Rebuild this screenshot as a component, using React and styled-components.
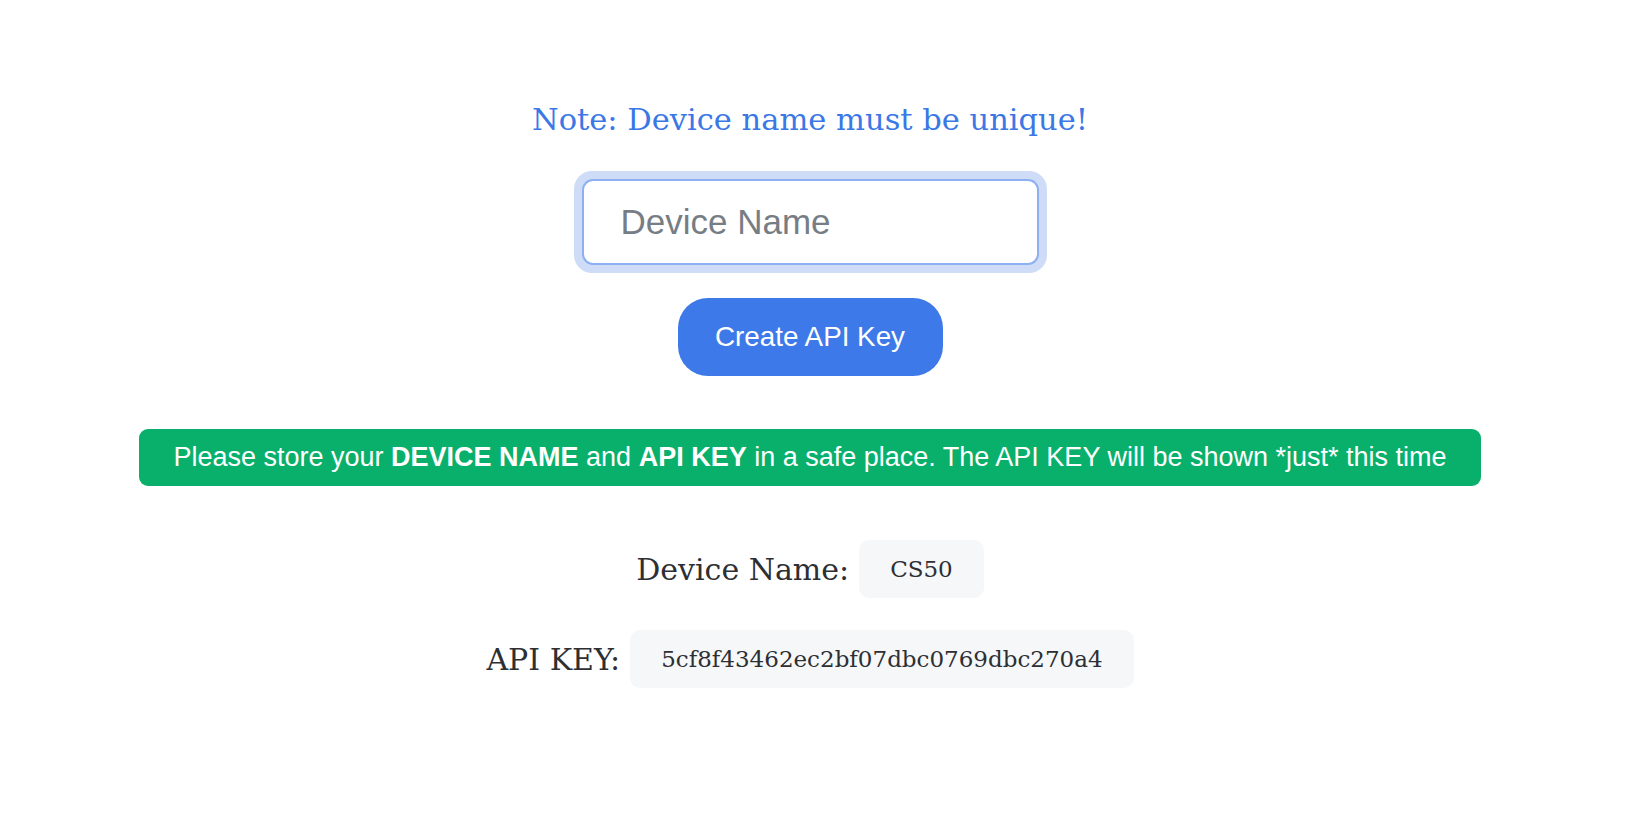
import React from "react";
import styled, { createGlobalStyle } from "styled-components";

const Global = createGlobalStyle`
  html, body { margin: 0; padding: 0; background: #fff; }
  body { font-family: "DejaVu Serif", serif; color: #2d2f33; }
`;

const Page = styled.main`
  width: calc(100% - 11px);
  display: flex;
  flex-direction: column;
  align-items: center;
  padding-top: 100px;
`;

const Heading = styled.h2`
  margin: 0;
  font-family: "DejaVu Serif", serif;
  font-weight: 400;
  font-size: 30.5px;
  line-height: 40px;
  color: #3b78e6;
`;

const Ring = styled.div`
  margin-top: 31px;
  padding: 8px;
  border-radius: 18px;
  background: #cedcf8;
`;

const Input = styled.input`
  box-sizing: border-box;
  display: block;
  width: 457px;
  height: 86px;
  padding: 0 0 0 37px;
  border: 2px solid #8db0f2;
  border-radius: 11px;
  background: #fff;
  outline: none;
  font-family: "Liberation Sans", Arial, sans-serif;
  font-size: 35px;
  color: #2d2f33;
  caret-color: #000;
  &::placeholder { color: #777d85; }
`;

const Button = styled.button`
  margin-top: 25px;
  width: 265px;
  height: 78px;
  border: none;
  border-radius: 30px;
  background: #3d79e8;
  color: #fff;
  font-family: "Liberation Sans", Arial, sans-serif;
  font-size: 27.8px;
  cursor: pointer;
`;

const Banner = styled.div`
  box-sizing: border-box;
  margin-top: 53px;
  width: 1342px;
  height: 57px;
  display: flex;
  align-items: center;
  justify-content: center;
  border-radius: 9px;
  background: #08b06b;
  color: #fff;
  font-family: "Liberation Sans", Arial, sans-serif;
  font-size: 27px;
  white-space: nowrap;
  b { font-weight: 700; }
`;

const Row = styled.div`
  display: flex;
  align-items: center;
  gap: 10px;
  margin-top: ${(p) => p.$top}px;
`;

const Label = styled.span`
  font-family: "DejaVu Serif", serif;
  font-size: 30px;
  color: #2d2f33;
`;

const Value = styled.span`
  box-sizing: border-box;
  height: 58px;
  display: flex;
  align-items: center;
  padding: 0 31px;
  border-radius: 10px;
  background: #f6f7f9;
  font-family: "DejaVu Serif", serif;
  font-size: 23px;
  color: #2d2f33;
`;

export default function App() {
  return (
    <>
      <Global />
      <Page>
        <Heading>Note: Device name must be unique!</Heading>
        <Ring>
          <Input placeholder="Device Name" autoFocus />
        </Ring>
        <Button>Create API Key</Button>
        <Banner>
          <span>
            Please store your <b>DEVICE NAME</b> and <b>API KEY</b> in a safe place. The API KEY will be shown *just* this time
          </span>
        </Banner>
        <Row $top={54}>
          <Label>Device Name:</Label>
          <Value>CS50</Value>
        </Row>
        <Row $top={32}>
          <Label>API KEY:</Label>
          <Value>5cf8f43462ec2bf07dbc0769dbc270a4</Value>
        </Row>
      </Page>
    </>
  );
}
